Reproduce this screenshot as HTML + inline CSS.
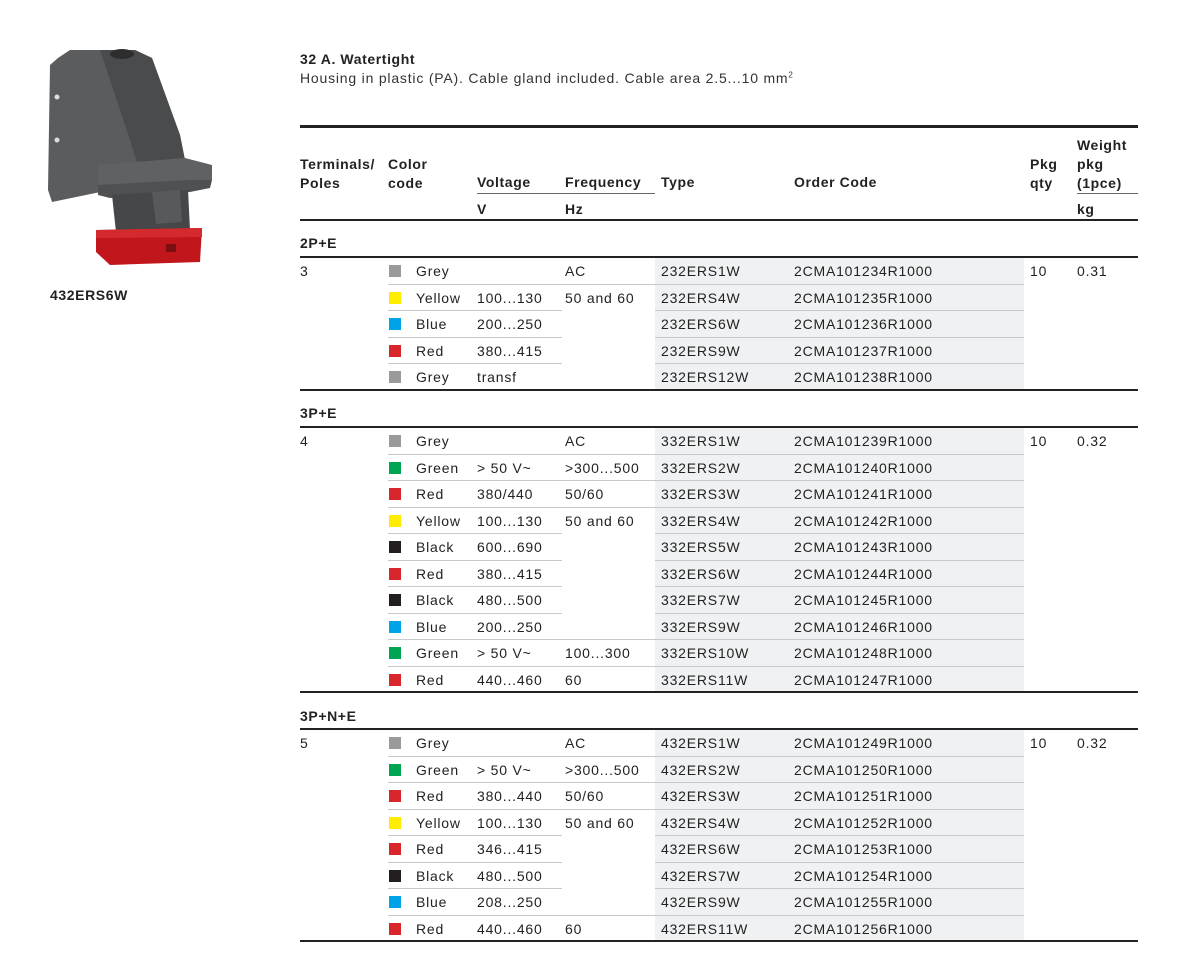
<!DOCTYPE html>
<html><head><meta charset="utf-8"><style>
*{margin:0;padding:0;box-sizing:border-box}
body{width:1200px;height:979px;background:#fff;font-family:"Liberation Sans",sans-serif;color:#222;font-size:14px;position:relative;overflow:hidden;letter-spacing:0.8px}
.a{position:absolute;white-space:nowrap}
.b{font-weight:bold;letter-spacing:0.6px}
.tl{position:absolute;left:300px;width:838px;background:#222}
.bg{position:absolute;left:655px;width:369px;background:#f0f1f2}
.r{position:absolute;left:0;width:1200px;height:26.5px}
.r span{position:absolute;top:0;line-height:26.5px;white-space:nowrap}
.r::after{content:"";position:absolute;left:388px;width:174px;bottom:0;height:1px;background:#c9c9c9}
.r::before{content:"";position:absolute;left:655px;width:369px;bottom:0;height:1px;background:#c9c9c9}
.r.last::after,.r.last::before{display:none}
.r b{position:absolute;left:562px;width:93px;bottom:0;height:1px;background:#c9c9c9}
.sq{position:absolute;left:389px;top:7px;width:12px;height:12px}
.c{left:416px}.v{left:477px}.f{left:565px}.t{left:661px}.o{left:794px}.p{left:1030px}.w{left:1077px}.n{left:300px}
</style></head><body>
<svg class="a" style="left:40px;top:40px" width="180" height="235" viewBox="0 0 180 235">
<path d="M18 18 L30 10 L95 10 L112 18 L140 95 L145 120 L70 150 L12 162 L8 150 L10 25 Z" fill="#5b5c5d"/>
<path d="M60 10 L95 10 L112 18 L140 95 L145 120 L100 132 L90 100 Z" fill="#4a4b4c"/>
<ellipse cx="82" cy="14" rx="12" ry="5" fill="#2e2e2f"/>
<path d="M58 125 L145 118 L172 125 L172 140 L150 146 L80 152 L58 148 Z" fill="#606162"/>
<path d="M58 145 L150 140 L172 140 L170 148 L150 152 L70 158 L58 155 Z" fill="#4f5051"/>
<path d="M72 155 L148 150 L150 190 L76 192 Z" fill="#464748"/>
<path d="M112 152 L140 150 L142 182 L116 184 Z" fill="#58595a"/>
<path d="M56 190 L162 188 L160 222 L70 225 L56 212 Z" fill="#c0161c"/>
<path d="M56 190 L162 188 L162 197 L56 198 Z" fill="#d42a2e"/>
<rect x="126" y="204" width="10" height="8" fill="#7a1013"/>
<circle cx="17" cy="57" r="2.5" fill="#ddd"/><circle cx="17" cy="100" r="2.5" fill="#ddd"/>
</svg>
<div class="a b" style="left:50px;top:287px;font-size:14px">432ERS6W</div>

<div class="a b" style="left:300px;top:51px;font-size:14px">32 A. Watertight</div>
<div class="a" style="left:300px;top:70px;font-size:14px;color:#333">Housing in plastic (PA). Cable gland included. Cable area 2.5...10 mm<sup style="font-size:8px">2</sup></div>

<div class="tl" style="top:125px;height:3px"></div>
<div class="a b" style="left:300px;top:155px;line-height:19px">Terminals/<br>Poles</div>
<div class="a b" style="left:388px;top:155px;line-height:19px">Color<br>code</div>
<div class="a b" style="left:477px;top:174px">Voltage</div>
<div class="a b" style="left:565px;top:174px">Frequency</div>
<div class="a b" style="left:661px;top:174px">Type</div>
<div class="a b" style="left:794px;top:174px">Order Code</div>
<div class="a b" style="left:1030px;top:155px;line-height:19px">Pkg<br>qty</div>
<div class="a b" style="left:1077px;top:136px;line-height:19px">Weight<br>pkg<br>(1pce)</div>
<div class="a" style="left:477px;top:193px;width:178px;height:1px;background:#666"></div>
<div class="a" style="left:1077px;top:193px;width:61px;height:1px;background:#666"></div>
<div class="a b" style="left:477px;top:201px">V</div>
<div class="a b" style="left:565px;top:201px">Hz</div>
<div class="a b" style="left:1077px;top:201px">kg</div>
<div class="tl" style="top:219px;height:2px"></div>

<!-- 2P+E -->
<div class="a b" style="left:300px;top:235px">2P+E</div>
<div class="tl" style="top:256px;height:2px"></div>
<div class="bg" style="top:258px;height:131px"></div>
<div class="r" style="top:258px"><i class="sq" style="background:#999a9b"></i><span class="n">3</span><span class="c">Grey</span><span class="f">AC</span><span class="t">232ERS1W</span><span class="o">2CMA101234R1000</span><span class="p">10</span><span class="w">0.31</span><b></b></div>
<div class="r" style="top:284.5px"><i class="sq" style="background:#ffec00"></i><span class="c">Yellow</span><span class="v">100...130</span><span class="f">50 and 60</span><span class="t">232ERS4W</span><span class="o">2CMA101235R1000</span></div>
<div class="r" style="top:311px"><i class="sq" style="background:#00a3e8"></i><span class="c">Blue</span><span class="v">200...250</span><span class="t">232ERS6W</span><span class="o">2CMA101236R1000</span></div>
<div class="r" style="top:337.5px"><i class="sq" style="background:#d9262c"></i><span class="c">Red</span><span class="v">380...415</span><span class="t">232ERS9W</span><span class="o">2CMA101237R1000</span></div>
<div class="r last" style="top:364px"><i class="sq" style="background:#999a9b"></i><span class="c">Grey</span><span class="v">transf</span><span class="t">232ERS12W</span><span class="o">2CMA101238R1000</span></div>
<div class="tl" style="top:389px;height:2px"></div>

<!-- 3P+E -->
<div class="a b" style="left:300px;top:405px">3P+E</div>
<div class="tl" style="top:426px;height:2px"></div>
<div class="bg" style="top:428px;height:264px"></div>
<div class="r" style="top:428px"><i class="sq" style="background:#999a9b"></i><span class="n">4</span><span class="c">Grey</span><span class="f">AC</span><span class="t">332ERS1W</span><span class="o">2CMA101239R1000</span><span class="p">10</span><span class="w">0.32</span><b></b></div>
<div class="r" style="top:454.5px"><i class="sq" style="background:#00a551"></i><span class="c">Green</span><span class="v">&gt; 50 V~</span><span class="f">&gt;300...500</span><span class="t">332ERS2W</span><span class="o">2CMA101240R1000</span><b></b></div>
<div class="r" style="top:481px"><i class="sq" style="background:#d9262c"></i><span class="c">Red</span><span class="v">380/440</span><span class="f">50/60</span><span class="t">332ERS3W</span><span class="o">2CMA101241R1000</span><b></b></div>
<div class="r" style="top:507.5px"><i class="sq" style="background:#ffec00"></i><span class="c">Yellow</span><span class="v">100...130</span><span class="f">50 and 60</span><span class="t">332ERS4W</span><span class="o">2CMA101242R1000</span></div>
<div class="r" style="top:534px"><i class="sq" style="background:#231f20"></i><span class="c">Black</span><span class="v">600...690</span><span class="t">332ERS5W</span><span class="o">2CMA101243R1000</span></div>
<div class="r" style="top:560.5px"><i class="sq" style="background:#d9262c"></i><span class="c">Red</span><span class="v">380...415</span><span class="t">332ERS6W</span><span class="o">2CMA101244R1000</span></div>
<div class="r" style="top:587px"><i class="sq" style="background:#231f20"></i><span class="c">Black</span><span class="v">480...500</span><span class="t">332ERS7W</span><span class="o">2CMA101245R1000</span></div>
<div class="r" style="top:613.5px"><i class="sq" style="background:#00a3e8"></i><span class="c">Blue</span><span class="v">200...250</span><span class="t">332ERS9W</span><span class="o">2CMA101246R1000</span><b></b></div>
<div class="r" style="top:640px"><i class="sq" style="background:#00a551"></i><span class="c">Green</span><span class="v">&gt; 50 V~</span><span class="f">100...300</span><span class="t">332ERS10W</span><span class="o">2CMA101248R1000</span><b></b></div>
<div class="r last" style="top:666.5px"><i class="sq" style="background:#d9262c"></i><span class="c">Red</span><span class="v">440...460</span><span class="f">60</span><span class="t">332ERS11W</span><span class="o">2CMA101247R1000</span></div>
<div class="tl" style="top:691px;height:2px"></div>

<!-- 3P+N+E -->
<div class="a b" style="left:300px;top:708px">3P+N+E</div>
<div class="tl" style="top:728px;height:2px"></div>
<div class="bg" style="top:730px;height:211px"></div>
<div class="r" style="top:730px"><i class="sq" style="background:#999a9b"></i><span class="n">5</span><span class="c">Grey</span><span class="f">AC</span><span class="t">432ERS1W</span><span class="o">2CMA101249R1000</span><span class="p">10</span><span class="w">0.32</span><b></b></div>
<div class="r" style="top:756.5px"><i class="sq" style="background:#00a551"></i><span class="c">Green</span><span class="v">&gt; 50 V~</span><span class="f">&gt;300...500</span><span class="t">432ERS2W</span><span class="o">2CMA101250R1000</span><b></b></div>
<div class="r" style="top:783px"><i class="sq" style="background:#d9262c"></i><span class="c">Red</span><span class="v">380...440</span><span class="f">50/60</span><span class="t">432ERS3W</span><span class="o">2CMA101251R1000</span><b></b></div>
<div class="r" style="top:809.5px"><i class="sq" style="background:#ffec00"></i><span class="c">Yellow</span><span class="v">100...130</span><span class="f">50 and 60</span><span class="t">432ERS4W</span><span class="o">2CMA101252R1000</span></div>
<div class="r" style="top:836px"><i class="sq" style="background:#d9262c"></i><span class="c">Red</span><span class="v">346...415</span><span class="t">432ERS6W</span><span class="o">2CMA101253R1000</span></div>
<div class="r" style="top:862.5px"><i class="sq" style="background:#231f20"></i><span class="c">Black</span><span class="v">480...500</span><span class="t">432ERS7W</span><span class="o">2CMA101254R1000</span></div>
<div class="r" style="top:889px"><i class="sq" style="background:#00a3e8"></i><span class="c">Blue</span><span class="v">208...250</span><span class="t">432ERS9W</span><span class="o">2CMA101255R1000</span><b></b></div>
<div class="r last" style="top:915.5px"><i class="sq" style="background:#d9262c"></i><span class="c">Red</span><span class="v">440...460</span><span class="f">60</span><span class="t">432ERS11W</span><span class="o">2CMA101256R1000</span></div>
<div class="tl" style="top:940px;height:2px"></div>
</body></html>
